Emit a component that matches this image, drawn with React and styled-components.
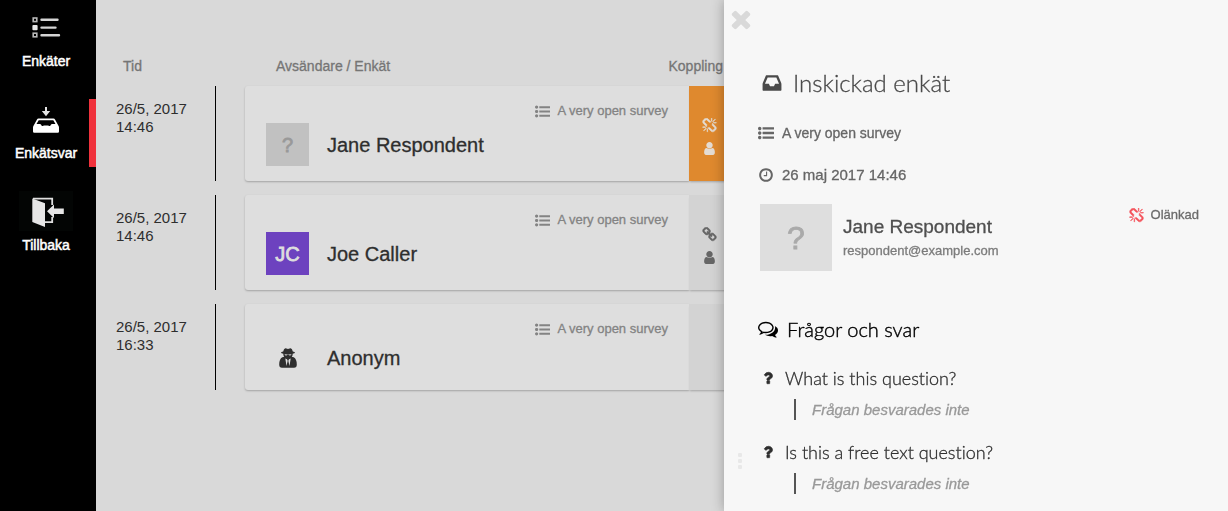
import React from 'react';
import styled, { createGlobalStyle } from 'styled-components';

const GlobalStyle = createGlobalStyle`
  *, *::before, *::after { box-sizing: border-box; }
  body {
    margin: 0;
    background: #d9d9d9;
    color: #2e2e2e;
    font-family: "Liberation Sans", Arial, sans-serif;
    font-size: 14px;
    line-height: 18px;
  }
  h1, h2, h3, p, ul { margin: 0; padding: 0; font-weight: normal; }
  ul { list-style: none; }
`;

const PATHS = {
  list: 'M384 1408q0 80-56 136t-136 56-136-56-56-136 56-136 136-56 136 56 56 136zm0-512q0 80-56 136t-136 56-136-56-56-136 56-136 136-56 136 56 56 136zm1408 416v192q0 13-9.5 22.5t-22.5 9.5h-1216q-13 0-22.5-9.5t-9.5-22.5v-192q0-13 9.5-22.5t22.5-9.5h1216q13 0 22.5 9.5t9.5 22.5zm-1408-928q0 80-56 136t-136 56-136-56-56-136 56-136 136-56 136 56 56 136zm1408 416v192q0 13-9.5 22.5t-22.5 9.5h-1216q-13 0-22.5-9.5t-9.5-22.5v-192q0-13 9.5-22.5t22.5-9.5h1216q13 0 22.5 9.5t9.5 22.5zm0-512v192q0 13-9.5 22.5t-22.5 9.5h-1216q-13 0-22.5-9.5t-9.5-22.5v-192q0-13 9.5-22.5t22.5-9.5h1216q13 0 22.5 9.5t9.5 22.5z',
  clock: 'M1024 544v448q0 14-9 23t-23 9h-320q-14 0-23-9t-9-23v-64q0-14 9-23t23-9h224v-352q0-14 9-23t23-9h64q14 0 23 9t9 23zm416 352q0-148-73-273t-198-198-273-73-273 73-198 198-73 273 73 273 198 198 273 73 273-73 198-198 73-273zm224 0q0 209-103 385.5t-279.5 279.5-385.5 103-385.5-103-279.5-279.5-103-385.5 103-385.5 279.5-279.5 385.5-103 385.5 103 279.5 279.5 103 385.5z',
  user: 'M1536 1399q0 109-62.5 187t-150.5 78h-854q-88 0-150.5-78t-62.5-187q0-85 8.5-160.5t31.5-152 58.5-131 94-89 134.5-34.5q131 128 313 128t313-128q76 0 134.5 34.5t94 89 58.5 131 31.5 152 8.5 160.5zm-256-887q0 159-112.5 271.5t-271.5 112.5-271.5-112.5-112.5-271.5 112.5-271.5 271.5-112.5 271.5 112.5 112.5 271.5z',
  inbox: 'M1151 960h316q-1-3-2.5-8t-2.5-8l-212-496h-708l-212 496q-1 2-2.5 8t-2.5 8h316l95 192h320zm513 30v482q0 26-19 45t-45 19h-1408q-26 0-45-19t-19-45v-482q0-62 25-123l238-552q10-25 36.5-42t52.5-17h832q26 0 52.5 17t36.5 42l238 552q25 61 25 123z',
  unlink: 'M503 1271l-256 256q-10 9-23 9-12 0-23-9-9-10-9-23t9-23l256-256q10-9 23-9t23 9q9 10 9 23t-9 23zm169 41v320q0 14-9 23t-23 9-23-9-9-23v-320q0-14 9-23t23-9 23 9 9 23zm-224-224q0 14-9 23t-23 9h-320q-14 0-23-9t-9-23 9-23 23-9h320q14 0 23 9t9 23zm1264 128q0 120-85 203l-147 146q-83 83-203 83-121 0-204-85l-334-335q-21-21-42-56l239-18 273 274q28 28 68 27.5t68-27.5l147-146q28-28 28-67 0-40-28-68l-274-275 18-239q35 21 56 42l336 336q84 86 84 204zm-617-724l-239 18-273-274q-28-28-68-28-39 0-68 27l-147 146q-28 28-28 67 0 40 28 68l274 274-18 240q-35-21-56-42l-336-336q-84-86-84-204 0-120 85-203l147-146q83-83 203-83 121 0 204 85l334 335q21 21 42 56zm633 84q0 14-9 23t-23 9h-320q-14 0-23-9t-9-23 9-23 23-9h320q14 0 23 9t9 23zm-544-544v320q0 14-9 23t-23 9-23-9-9-23v-320q0-14 9-23t23-9 23 9 9 23zm407 151l-256 256q-11 9-23 9t-23-9q-9-10-9-23t9-23l256-256q10-9 23-9t23 9q9 10 9 23t-9 23z',
  link: 'M1520 1216q0-40-28-68l-208-208q-28-28-68-28-42 0-72 32 3 3 19 18.5t21.5 21.5 15 19 13 25.5 3.5 27.5q0 40-28 68t-68 28q-15 0-27.5-3.5t-25.5-13-19-15-21.5-21.5-18.5-19q-33 31-33 73 0 40 28 68l206 207q27 27 68 27 40 0 68-26l147-146q28-28 28-67zm-703-705q0-40-28-68l-206-207q-28-28-68-28-39 0-68 27l-147 146q-28 28-28 67 0 40 28 68l208 208q27 27 68 27 42 0 72-31-3-3-19-18.5t-21.5-21.5-15-19-13-25.5-3.5-27.5q0-40 28-68t68-28q15 0 27.5 3.5t25.5 13 19 15 21.5 21.5 18.5 19q33-31 33-73zm895 705q0 120-85 203l-147 146q-83 83-203 83-121 0-204-85l-206-207q-83-83-83-203 0-123 88-209l-88-88q-86 88-208 88-120 0-204-84l-208-208q-84-84-84-204t85-203l147-146q83-83 203-83 121 0 204 85l206 207q83 83 83 203 0 123-88 209l88 88q86-88 208-88 120 0 204 84l208 208q84 84 84 204z',
  comments: 'M704 384q-153 0-286 52t-211.5 141-78.5 191q0 82 53 158t149 132l97 56-35 84q34-20 62-39l44-31 53 10q78 14 153 14 153 0 286-52t211.5-141 78.5-191-78.5-191-211.5-141-286-52zm0-128q191 0 353.5 68.500t256.5 186.500 94 257-94 257-256.500 186.500-353.500 68.500q-86 0-176-16-124 88-278 128-36 9-86 16h-3q-11 0-20.5-8t-11.500-21q-1-3-1-6.500t.5-6.500 2-6l2.500-5 3.500-5.500 4-5 4.500-5 4-4.500q5-6 23-25t26-29.500 22.500-29 25-38.500 20.500-44q-124-72-195-177t-71-224q0-139 94-257t256.500-186.500 353.500-68.500zm822 1169q10 24 20.500 44t25 38.500 22.500 29 26 29.500 23 25q1 1 4 4.500t4.500 5 4 5 3.500 5.500l2.500 5 2 6 .5 6.500-1 6.500q-3 14-13 22t-22 7q-50-7-86-16-154-40-278-128-90 16-176 16-271 0-472-132 58 4 88 4 161 0 309-45t264-129q125-92 192-212t67-254q0-77-23-152 129 71 204 178t75 230q0 120-71 224.500t-195 176.500z',
  question: 'M1088 1256v240q0 16-12 28t-28 12h-240q-16 0-28-12t-12-28v-240q0-16 12-28t28-12h240q16 0 28 12t12 28zm316-600q0 54-15.5 101t-35 76.500-55 59.500-57.500 43.500-61 35.500q-41 23-68.500 65t-27.500 67q0 17-12 32.500t-28 15.500h-240q-15 0-25.500-18.500t-10.500-37.500v-45q0-83 65-156.500t143-108.500q59-27 84-56t25-76q0-42-46.500-74t-107.500-32q-65 0-108 29-35 25-107 115-13 16-31 16-12 0-25-8l-164-125q-13-10-15.500-25t5.500-28q160-266 464-266 80 0 161 31t146 83 106 127.500 41 158.500z',
  close: 'M1490 1322q0 40-28 68l-136 136q-28 28-68 28t-68-28l-294-294-294 294q-28 28-68 28t-68-28l-136-136q-28-28-28-68t28-68l294-294-294-294q-28-28-28-68t28-68l136-136q28-28 68-28t68 28l294 294 294-294q28-28 68-28t68 28l136 136q28 28 28 68t-28 68l-294 294 294 294q28 28 28 68z',
};

const Svg = styled.svg`
  display: block;
  flex: none;
  width: ${(p) => p.$size}px;
  height: ${(p) => p.$size}px;
  fill: currentColor;
  stroke: currentColor;
  stroke-width: ${(p) => (p.$heavy ? 70 : 0)};
`;

const Icon = ({ name, size = 14, heavy }) => (
  <Svg $size={size} $heavy={heavy} viewBox="0 0 1792 1792" aria-hidden="true">
    <path d={PATHS[name]} />
  </Svg>
);

const AnonymousIcon = () => (
  <Svg $size={22} viewBox="0 0 22 22" aria-hidden="true">
    <path
      fillRule="evenodd"
      d="M6.200 4.600Q6.800 1.300 8.300 1.200 9.200 1.200 11 1.900 12.800 1.200 13.700 1.200 15.200 1.300 15.800 4.600 18 5 18 5.500 18 6.200 15.700 6.700L15.600 8.200 14.800 9.800 16.700 10.300Q19.800 12 19.800 17.500 19.800 20.800 17 20.800H5Q2.200 20.800 2.200 17.500 2.200 12 5.300 10.300L7.200 9.800 6.400 8.200 6.300 6.700Q4 6.200 4 5.500 4 5 6.200 4.600zM7.500 7.200Q8 8.700 9.300 8.500 10.400 8.300 11 7.600 11.600 8.300 12.700 8.500 14 8.700 14.500 7.200L11 7.500zM8.300 11.500L9.500 19 10.700 13.800 10 12.300zM13.700 11.500L12.500 19 11.300 13.800 12 12.300z"
    />
  </Svg>
);

const Page = styled.div`
  display: flex;
  min-height: 100vh;
`;

/* Navigation */

const Sidebar = styled.nav`
  flex: none;
  width: 96px;
  padding-top: 7px;
  background: #000;
`;

const NavList = styled.ul`
  display: grid;
  gap: 24px;
`;

const NavLink = styled.a`
  display: flex;
  flex-direction: column;
  align-items: center;
  gap: 5px;
  height: 68px;
  padding-left: 3px;
  border-right: 7px solid ${(p) => (p.$active ? '#f0323c' : 'transparent')};
  color: #fff;
  text-decoration: none;
  -webkit-text-stroke: 0.5px #fff;
`;

const NavIcon = styled.svg`
  display: block;
  width: 54px;
  height: 40px;
  background: ${(p) => p.$tint || 'transparent'};
`;

const SurveysIcon = () => (
  <NavIcon viewBox="0 0 54 40" aria-hidden="true">
    <g fill="none" stroke="#b8b8b8" strokeWidth="1.600">
      <rect x="14.200" y="11" width="3.600" height="3.600" />
      <rect x="14.200" y="26.200" width="3.600" height="3.600" />
    </g>
    <rect x="13.400" y="18" width="5.200" height="5.200" rx="1" fill="#e8e8e8" />
    <g stroke="#d4d4d4" strokeWidth="2.400" strokeLinecap="round">
      <path d="M22.500 12.800H38.500M22.500 20.600H36.500M22.500 28.200H40" />
    </g>
  </NavIcon>
);

const AnswersIcon = () => (
  <NavIcon viewBox="0 0 54 40" aria-hidden="true">
    <path d="M26 8h2v4h3.200L27 17.200l-4.200-5.200H26z" fill="#e4e4e4" />
    <path
      fill="#fff"
      fillRule="evenodd"
      d="M19.500 19.500h15q1 0 1.500 1l3.600 6.500q.4.700.4 1.500v4q0 1.200-1.200 1.200H15.200q-1.200 0-1.200-1.200v-4q0-.8.400-1.500l3.600-6.500q.5-1 1.500-1zm.2 1.700L17.500 25h3.300q1 0 1.500 1l.4.800q.3.400 1 .2l1.300-.5h4l1.300.5q.7.200 1-.2l.4-.8q.5-1 1.500-1h3.300l-2.200-3.800z"
    />
  </NavIcon>
);

const BackIcon = () => (
  <NavIcon viewBox="0 0 54 40" $tint="#030504" aria-hidden="true">
    <path d="M13.300 7.500L26 12.200V36L13.300 31z" fill="#e6e6e6" />
    <path d="M14 7.600H33.200V14M33.200 26V31.200H26" fill="none" stroke="#e0e0e0" strokeWidth="1.800" />
    <path d="M28 20.200l7-6.600v3.900h9.800v5.600H35v3.900z" fill="#e6e6e6" />
  </NavIcon>
);

/* List of submitted surveys */

const Main = styled.main`
  flex: 1;
  min-width: 0;
  padding: 57px 499px 0 0;
`;

const Table = styled.table`
  display: block;
`;

const Head = styled.thead`
  display: block;
  margin-bottom: 11px;
  color: #757575;
`;

const Body = styled.tbody`
  display: grid;
  gap: 14px;
`;

const Row = styled.tr`
  display: grid;
  grid-template-columns: 149px minmax(0, 1fr) 40px;
`;

const HeadCell = styled.th`
  padding: 0 0 0 ${(p) => p.$indent || 0}px;
  font-weight: normal;
  text-align: left;
  white-space: nowrap;
  -webkit-text-stroke: 0.3px currentColor;
`;

const LinkHeadCell = styled(HeadCell)`
  display: flex;
  justify-content: flex-end;
  padding-right: 6px;
`;

const TimeCell = styled.td`
  margin-right: 29px;
  padding: 14px 0 0 20px;
  border-right: 1px solid #000;
  font-size: 15px;
`;

const Day = styled.div``;

const CardCell = styled.td`
  display: grid;
  gap: 3px;
  padding: 16px 21px 15px;
  border-radius: 3px 0 0 3px;
  background: #dedede;
  box-shadow: 0 1px 2px rgba(0, 0, 0, 0.25);
`;

const SurveyTag = styled.div`
  display: flex;
  justify-content: flex-end;
  align-items: center;
  gap: 7px;
  color: #838383;
  font-size: 13px;
  -webkit-text-stroke: 0.3px currentColor;
`;

const Sender = styled.div`
  display: flex;
  align-items: center;
  gap: 18px;
  min-height: 34px;
  font-size: 20px;
  line-height: 24px;
  -webkit-text-stroke: 0.3px currentColor;
`;

const Avatar = styled.span`
  display: flex;
  flex: none;
  align-items: center;
  justify-content: center;
  width: ${(p) => (p.$large ? 72 : 43)}px;
  height: ${(p) => (p.$large ? 67 : p.$bare ? 34 : 43)}px;
  background: ${(p) => p.$bg || 'transparent'};
  color: ${(p) => p.$fg || 'inherit'};
  font-size: ${(p) => (p.$large ? 32 : 20)}px;
  -webkit-text-stroke: 0.8px currentColor;
`;

const StatusCell = styled.td`
  display: flex;
  flex-direction: column;
  align-items: center;
  gap: 8px;
  padding-top: 32px;
  background: ${(p) => (p.$alert ? '#df892e' : '#d3d3d3')};
  color: ${(p) => (p.$alert ? '#e4dcd3' : '#666')};
  box-shadow: 0 2px 2px -1px rgba(0, 0, 0, 0.25);
`;

/* Detail drawer */

const Drawer = styled.aside`
  position: fixed;
  top: 0;
  right: 0;
  bottom: 0;
  width: 504px;
  overflow: hidden;
  background: #f7f7f7;
  box-shadow: 0 0 12px rgba(0, 0, 0, 0.3);
  color: #666;
`;

const CloseButton = styled.button`
  display: block;
  margin: 5px 0 0 3px;
  padding: 0;
  border: 0;
  background: none;
  color: #d9d9d9;
  cursor: pointer;
`;

const DragHandle = styled.button`
  position: absolute;
  left: 14px;
  top: 453px;
  display: grid;
  gap: 2px;
  padding: 0;
  border: 0;
  background: none;
  cursor: ew-resize;
`;

const HandleDot = styled.span`
  width: 4px;
  height: 4px;
  border-radius: 1px;
  background: #e8e8e8;
`;

const Content = styled.div`
  padding: 36px 29px 0 34px;
  font-variant-ligatures: none;
`;

const Title = styled.h1`
  display: flex;
  align-items: center;
  gap: 10px;
  padding-left: 3px;
  margin-bottom: 27px;
  color: #4a4a4a;
  font: 300 24px/28px Lato, sans-serif;
  font-variant-ligatures: none;
  -webkit-text-stroke: 0.3px currentColor;
`;

const Meta = styled.p`
  display: flex;
  align-items: center;
  gap: 8px;
  margin-bottom: ${(p) => p.$after}px;
  font-size: ${(p) => p.$size}px;
  -webkit-text-stroke: 0.3px currentColor;
`;

const Respondent = styled.section`
  display: flex;
  gap: 11px;
  margin: 0 0 44px 2px;
`;

const Identity = styled.div`
  flex: 1;
  padding-top: 11px;
`;

const Name = styled.h2`
  margin-bottom: 3px;
  color: #4f4f4f;
  font-size: 19px;
  line-height: 24px;
  -webkit-text-stroke: 0.3px currentColor;
`;

const Email = styled.p`
  color: #7c7c7c;
  font-size: 13px;
  -webkit-text-stroke: 0.3px currentColor;
`;

const LinkState = styled.p`
  display: flex;
  align-items: center;
  gap: 7px;
  height: 22px;
  font-size: 13px;
  color: #6b6b6b;
  -webkit-text-stroke: 0.3px currentColor;

  svg { color: #f4535b; }
`;

const SectionTitle = styled.h2`
  display: flex;
  align-items: center;
  gap: 9px;
  margin-bottom: 23px;
  color: #000;
  font: 300 20px/28px Lato, sans-serif;
  font-variant-ligatures: none;
  -webkit-text-stroke: 0.4px currentColor;
`;

const Question = styled.li`
  margin-bottom: 20px;
`;

const QuestionText = styled.h3`
  display: flex;
  align-items: center;
  gap: 9px;
  padding-left: 2px;
  margin-bottom: 9px;
  color: #2e2e2e;
  font: 300 18px/24px Lato, sans-serif;
  font-variant-ligatures: none;
  -webkit-text-stroke: 0.3px currentColor;
`;

const Answer = styled.p`
  margin-left: 36px;
  padding-left: 16px;
  border-left: 2px solid #555;
  color: #999;
  font-size: 15px;
  font-style: italic;
  line-height: 21px;
  -webkit-text-stroke: 0.3px currentColor;
`;

const NAV = [
  { label: 'Enkäter', Glyph: SurveysIcon },
  { label: 'Enkätsvar', Glyph: AnswersIcon, active: true },
  { label: 'Tillbaka', Glyph: BackIcon },
];

const ENTRIES = [
  { day: '26/5, 2017', time: '14:46', name: 'Jane Respondent', initials: '?', bg: '#c1c1c1', fg: '#999', state: 'unlink' },
  { day: '26/5, 2017', time: '14:46', name: 'Joe Caller', initials: 'JC', bg: '#6d42bf', fg: '#dedede', state: 'link' },
  { day: '26/5, 2017', time: '16:33', name: 'Anonym' },
];

const QUESTIONS = ['What is this question?', 'Is this a free text question?'];

export default function App() {
  return (
    <Page>
      <GlobalStyle />
      <Sidebar>
        <NavList>
          {NAV.map(({ label, Glyph, active }) => (
            <li key={label}>
              <NavLink href="#" $active={active} aria-current={active ? 'page' : undefined}>
                <Glyph />
                {label}
              </NavLink>
            </li>
          ))}
        </NavList>
      </Sidebar>

      <Main>
        <Table>
          <Head>
            <Row>
              <HeadCell scope="col" $indent={27}>Tid</HeadCell>
              <HeadCell scope="col" $indent={31}>Avsändare / Enkät</HeadCell>
              <LinkHeadCell scope="col">Koppling</LinkHeadCell>
            </Row>
          </Head>
          <Body>
            {ENTRIES.map((entry) => (
              <Row key={entry.name}>
                <TimeCell>
                  <Day>{entry.day}</Day>
                  <Day>{entry.time}</Day>
                </TimeCell>
                <CardCell>
                  <SurveyTag>
                    <Icon name="list" size={15} />
                    A very open survey
                  </SurveyTag>
                  <Sender>
                    <Avatar $bg={entry.bg} $fg={entry.fg} $bare={!entry.initials}>
                      {entry.initials || <AnonymousIcon />}
                    </Avatar>
                    {entry.name}
                  </Sender>
                </CardCell>
                <StatusCell $alert={entry.state === 'unlink'}>
                  {entry.state && (
                    <>
                      <Icon name={entry.state} size={15} heavy />
                      <Icon name="user" size={15} />
                    </>
                  )}
                </StatusCell>
              </Row>
            ))}
          </Body>
        </Table>
      </Main>

      <Drawer>
        <CloseButton type="button" aria-label="Stäng">
          <Icon name="close" size={28} />
        </CloseButton>
        <DragHandle type="button" aria-label="Ändra bredd">
          <HandleDot />
          <HandleDot />
          <HandleDot />
        </DragHandle>
        <Content>
          <Title>
            <Icon name="inbox" size={22} />
            Inskickad enkät
          </Title>
          <Meta $size={14} $after={24}>
            <Icon name="list" size={16} />
            A very open survey
          </Meta>
          <Meta $size={15} $after={20}>
            <Icon name="clock" size={16} />
            26 maj 2017 14:46
          </Meta>
          <Respondent>
            <Avatar $large $bg="#dedede" $fg="#aaa">?</Avatar>
            <Identity>
              <Name>Jane Respondent</Name>
              <Email>respondent@example.com</Email>
            </Identity>
            <LinkState>
              <Icon name="unlink" size={15} heavy />
              Olänkad
            </LinkState>
          </Respondent>
          <SectionTitle>
            <Icon name="comments" size={20} />
            Frågor och svar
          </SectionTitle>
          <ul>
            {QUESTIONS.map((question) => (
              <Question key={question}>
                <QuestionText>
                  <Icon name="question" size={16} heavy />
                  {question}
                </QuestionText>
                <Answer>Frågan besvarades inte</Answer>
              </Question>
            ))}
          </ul>
        </Content>
      </Drawer>
    </Page>
  );
}
